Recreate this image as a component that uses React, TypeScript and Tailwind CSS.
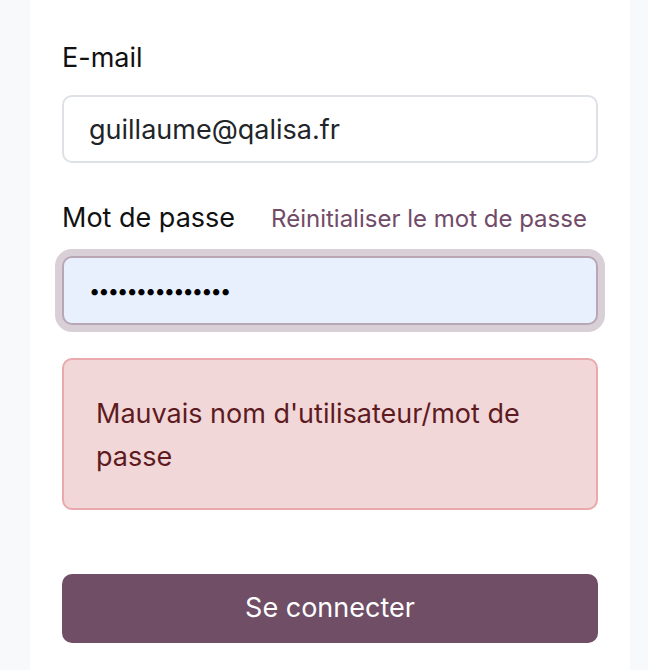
export default function App() {
  return (
    <div className="min-h-screen bg-[#f8f9fa] font-['Inter',sans-serif]">
      <div className="ml-[30px] min-h-[670px] w-[600px] bg-white px-[32px] pt-[38px]">
        <form className="flex flex-col" onSubmit={(e) => e.preventDefault()}>
          <label className="mb-[17px] text-[27px] leading-[40px] text-[#111]">E-mail</label>
          <input
            type="text"
            defaultValue="guillaume@qalisa.fr"
            className="h-[68px] rounded-[10px] border-2 border-[#dee2e6] bg-white px-[25px] text-[27px] text-[#212529] outline-none"
          />

          <div className="mt-[35px] mb-[18px] flex items-baseline gap-[36px]">
            <label className="text-[27px] leading-[40px] text-[#111]">Mot de passe</label>
            <a href="#" className="text-[24px] text-[#714b67]">
              Réinitialiser le mot de passe
            </a>
          </div>
          <input
            type="password"
            defaultValue="•••••••••••••••"
            className="h-[69px] rounded-[10px] border-2 border-[#b9a7b5] bg-[#e8f0fe] px-[25px] text-[20px] tracking-[-1.9px] text-black outline-none ring-[7px] ring-[#d8d0d6]"
          />

          <div className="mt-[33px] rounded-[10px] border-2 border-[#eaa9ad] bg-[#f2d7d9] px-[32px] pt-[32px] pb-[30px] text-[27px] leading-[43px] text-[#5e1b1f]">
            Mauvais nom d'utilisateur/mot de passe
          </div>

          <button
            type="submit"
            className="mt-[64px] h-[69px] rounded-[10px] bg-[#6f4e66] text-[27px] text-white"
          >
            Se connecter
          </button>
        </form>
      </div>
    </div>
  );
}
